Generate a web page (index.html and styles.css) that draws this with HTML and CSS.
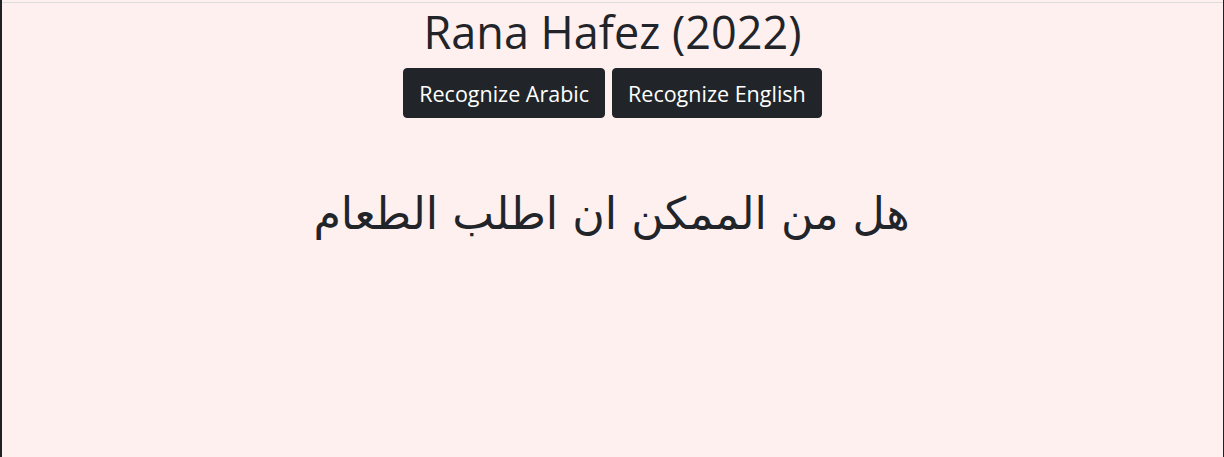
FILE: index.html
```html
<!DOCTYPE html>
<html lang="en">
<head>
<meta charset="utf-8">
<title>Rana Hafez (2022)</title>
<link rel="stylesheet" href="styles.css">
</head>
<body>
<div class="frame">
  <div class="page">
    <h1 class="title">Rana Hafez (2022)</h1>
    <div class="actions">
      <button class="btn">Recognize Arabic</button>
      <button class="btn">Recognize English</button>
    </div>
    <p class="result" dir="rtl" lang="ar">هل من الممكن ان اطلب الطعام</p>
  </div>
</div>
</body>
</html>
```
FILE: styles.css
```css
html, body {
  margin: 0;
  padding: 0;
  height: 100%;
  background: #fff0f0;
}
body {
  font-family: "Open Sans", "Noto Sans", "DejaVu Sans", sans-serif;
  color: #212529;
}
.frame {
  box-sizing: border-box;
  height: 100%;
  border-left: 2px solid #202124;
  border-right: 1px solid #202124;
  padding-top: 2px;
  background: #fff0f0;
}
.page {
  border-top: 1px solid #dcdcdc;
  text-align: center;
}
.title {
  margin: 0;
  padding-top: 1px;
  font-size: 45px;
  font-weight: 400;
  line-height: 56px;
}
.actions {
  display: flex;
  justify-content: center;
  gap: 7px;
  margin-top: 8px;
}
.btn {
  height: 50px;
  padding: 0 15px;
  border: 1px solid #212529;
  border-radius: 4px;
  background: #212529;
  color: #fff;
  font-family: inherit;
  font-size: 21.5px;
}
.result {
  margin: 66px 0 0;
  padding-right: 2px;
  font-family: "DejaVu Sans", sans-serif;
  font-size: 44.4px;
  line-height: 60px;
}
```
